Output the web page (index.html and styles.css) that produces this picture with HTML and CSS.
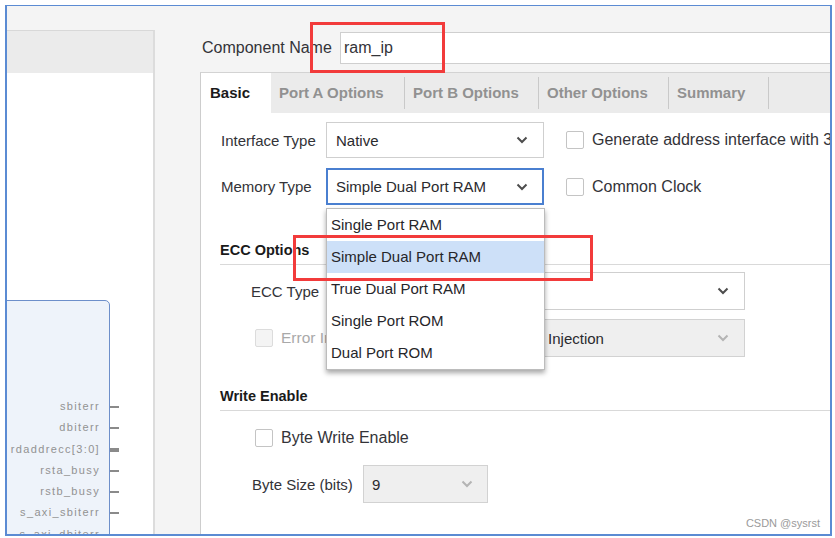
FILE: index.html
```html
<!DOCTYPE html>
<html>
<head>
<meta charset="utf-8">
<title>Block Memory Generator</title>
<link rel="stylesheet" href="styles.css">
</head>
<body>
<div class="frame">
  <aside class="side">
    <div class="side-panel">
      <div class="side-head"></div>
      <div class="canvas">
        <div class="symbol">
          <ul class="pins">
            <li class="pin">sbiterr</li>
            <li class="pin">dbiterr</li>
            <li class="pin bus">rdaddrecc[3:0]</li>
            <li class="pin">rsta_busy</li>
            <li class="pin">rstb_busy</li>
            <li class="pin">s_axi_sbiterr</li>
            <li class="pin">s_axi_dbiterr</li>
          </ul>
        </div>
      </div>
    </div>
  </aside>

  <main class="main">
    <div class="comp-row">
      <span class="comp-label">Component Name</span>
      <div class="comp-input">ram_ip</div>
    </div>

    <section class="tabpanel">
      <nav class="tabs">
        <span class="tab active">Basic</span>
        <span class="tab tab-a">Port A Options</span><span class="sep"></span>
        <span class="tab tab-b">Port B Options</span><span class="sep"></span>
        <span class="tab tab-o">Other Options</span><span class="sep"></span>
        <span class="tab tab-s">Summary</span><span class="sep"></span>
      </nav>

      <div class="tab-body">
        <div class="row">
          <span class="label">Interface Type</span>
          <div class="select wide"><span>Native</span><svg class="chev" width="12" height="8" viewBox="0 0 12 8"><path d="M1.5 1.5 L6 6 L10.5 1.5" fill="none" stroke="#4d4d4d" stroke-width="2"/></svg></div>
          <span class="cb gap"></span>
          <span class="cb-text">Generate address interface with 32 bits</span>
        </div>

        <div class="row row2">
          <span class="label">Memory Type</span>
          <div class="select wide focus">
            <span>Simple Dual Port RAM</span><svg class="chev" width="12" height="8" viewBox="0 0 12 8"><path d="M1.5 1.5 L6 6 L10.5 1.5" fill="none" stroke="#4d4d4d" stroke-width="2"/></svg>
            <ul class="menu">
              <li>Single Port RAM</li>
              <li class="hl">Simple Dual Port RAM</li>
              <li>True Dual Port RAM</li>
              <li>Single Port ROM</li>
              <li>Dual Port ROM</li>
            </ul>
          </div>
          <span class="cb gap"></span>
          <span class="cb-text">Common Clock</span>
        </div>

        <h3 class="section sec-ecc">ECC Options</h3>

        <div class="row ind ecc-row">
          <span class="label ecc-label">ECC Type</span>
          <div class="select ecc-select"><span></span><svg class="chev" width="12" height="8" viewBox="0 0 12 8"><path d="M1.5 1.5 L6 6 L10.5 1.5" fill="none" stroke="#4d4d4d" stroke-width="2"/></svg></div>
        </div>

        <div class="row ind err-row">
          <div class="check-wrap">
            <span class="cb dis"></span>
            <span class="cb-text dim">Error Injection Pins</span>
          </div>
          <div class="select ecc-select disabled err-select"><span>Single Bit Error Injection</span><svg class="chev" width="12" height="8" viewBox="0 0 12 8"><path d="M1.5 1.5 L6 6 L10.5 1.5" fill="none" stroke="#b4b4b4" stroke-width="2"/></svg></div>
        </div>

        <h3 class="section sec-we">Write Enable</h3>

        <div class="row ind bwe-row">
          <span class="cb"></span>
          <span class="cb-text">Byte Write Enable</span>
        </div>

        <div class="row ind bs-row">
          <span class="label bs-label">Byte Size (bits)</span>
          <div class="select disabled bs-select"><span>9</span><svg class="chev" width="12" height="8" viewBox="0 0 12 8"><path d="M1.5 1.5 L6 6 L10.5 1.5" fill="none" stroke="#b4b4b4" stroke-width="2"/></svg></div>
        </div>
      </div>
    </section>
  </main>

  <div class="mark mark-name"></div>
  <div class="mark mark-type"></div>
  <div class="wm">CSDN @sysrst</div>
</div>
</body>
</html>
```

FILE: styles.css
```css
* { box-sizing: border-box; }
html, body { margin: 0; padding: 0; }
body {
  width: 835px;
  height: 538px;
  overflow: hidden;
  background: #ffffff;
  font-family: "Liberation Sans", Arial, sans-serif;
  font-size: 15px;
  color: #333338;
}
ul { list-style: none; margin: 0; padding: 0; }
h3 { margin: 0; }

.frame {
  position: relative;
  margin: 5px 0 0 5px;
  width: 827px;
  height: 531px;
  border: 2px solid #5b8bd3;
  border-top-width: 1px;
  background: #f4f4f4;
  display: flex;
  overflow: hidden;
}

/* left: symbol view */
.side {
  width: 148px;
  flex: none;
  padding-top: 24px;
  display: flex;
}
.side-panel {
  flex: 1;
  background: #fff;
  border-top: 1px solid #d8d8d8;
  border-right: 2px solid #dcdcdc;
  display: flex;
  flex-direction: column;
}
.side-head {
  height: 42px;
  background: #ebebeb;
}
.canvas {
  flex: 1;
  position: relative;
  overflow: hidden;
}
.symbol {
  position: absolute;
  left: -3px;
  top: 227px;
  width: 106px;
  height: 300px;
  background: #eef3fa;
  border: 1px solid #6d8fca;
  border-top-right-radius: 5px;
  padding-top: 95px;
}
.pins { display: flex; flex-direction: column; }
.pin {
  position: relative;
  height: 21.3px;
  line-height: 21.3px;
  text-align: right;
  padding-right: 9px;
  font-size: 11px;
  letter-spacing: 1.35px;
  color: #929292;
  white-space: nowrap;
}
.pin::after {
  content: "";
  position: absolute;
  right: -10px;
  top: 10px;
  width: 9px;
  height: 2px;
  background: #8a8a8a;
}
.pin.bus::after { height: 4px; top: 9px; }

/* right: configuration */
.main {
  flex: 1;
  margin-left: 45px;
  display: flex;
  flex-direction: column;
  min-width: 0;
}
.comp-row {
  display: flex;
  align-items: center;
  height: 32px;
  margin-top: 26px;
  padding-left: 2px;
  font-size: 16px;
}
.comp-label { width: 138px; flex: none; }
.comp-input {
  flex: 1;
  height: 32px;
  background: #fff;
  border: 1px solid #cfcfcf;
  border-right: none;
  padding-left: 3px;
  display: flex;
  align-items: center;
}

.tabpanel {
  margin-top: 8px;
  flex: 1;
  background: #fff;
  border-top: 1px solid #d3d3d3;
  border-left: 1px solid #cdcdcd;
  display: flex;
  flex-direction: column;
}
.tabs {
  height: 40px;
  flex: none;
  background: #ebebeb;
  display: flex;
  align-items: center;
  padding-bottom: 1px;
}
.tab {
  height: 100%;
  display: flex;
  align-items: center;
  font-weight: bold;
  font-size: 15px;
  color: #919191;
  padding-left: 8px;
  flex: none;
}
.tab.active { width: 70px; padding-left: 9px; background: #fff; color: #1b1b1b; height: 40px; align-self: flex-start; padding-bottom: 1px; }
.tab-a { width: 133px; }
.tab-b { width: 133px; }
.tab-o { width: 129px; }
.tab-s { width: 99px; }
.sep { width: 1px; height: 32px; background: #c9c9c9; flex: none; }

.tab-body { flex: 1; padding-top: 9px; position: relative; }

.row {
  display: flex;
  align-items: center;
  height: 36px;
  padding-left: 20px;
}
.row2 { margin-top: 10px; height: 37px; }
.label { width: 105px; flex: none; }

.select {
  position: relative;
  height: 100%;
  display: flex;
  align-items: center;
  justify-content: space-between;
  background: #fff;
  border: 1px solid #cfcfcf;
  padding: 0 15px 0 9px;
  color: #2a2a2e;
  flex: none;
}
.select.wide { width: 218px; }
.select.focus { border: 2px solid #4a7fd0; padding-left: 8px; padding-right: 14px; }
.select.disabled { background: #efefef; border-color: #d2d2d2; }
.chev { flex: none; }

.cb {
  width: 18px;
  height: 18px;
  flex: none;
  background: #fff;
  border: 1px solid #c4c4c4;
  border-radius: 2px;
}
.cb.gap { margin-left: 22px; }
.cb.dis { background: #f4f4f4; border-color: #dcdcdc; }
.cb-text { margin-left: 8px; white-space: nowrap; font-size: 16px; }
.cb-text.dim { color: #a9a9a9; font-size: 15.5px; }

.menu {
  position: absolute;
  left: -2px;
  top: 38px;
  width: 219px;
  background: #fff;
  border: 1px solid #bcbcbc;
  box-shadow: 0 3px 5px rgba(0, 0, 0, 0.35);
  z-index: 5;
}
.menu li {
  height: 32px;
  line-height: 31px;
  padding-left: 4px;
  color: #26262a;
}
.menu li.hl { background: #cde0f8; }

.section {
  margin-left: 19px;
  padding-bottom: 5px;
  border-bottom: 1px solid #d9d9d9;
  font-size: 14.5px;
  line-height: 17px;
  font-weight: bold;
  color: #1a1a1a;
}
.sec-ecc { margin-top: 37px; }
.sec-we { margin-top: 31px; }

.row.ind { padding-left: 50px; height: 38px; }
.ecc-row { margin-top: 7px; }
.ecc-label { width: 176px; }
.ecc-select { width: 318px; }
.err-select { padding-left: 15px; }
.err-row { margin-top: 9px; }
.check-wrap { width: 176px; flex: none; display: flex; align-items: center; padding-left: 4px; overflow: hidden; }

.row.bwe-row { margin-top: 18px; height: 18px; padding-left: 54px; }
.row.bs-row { margin-top: 18px; padding-left: 51px; }
.bs-label { width: 111px; }
.bs-select { width: 125px; padding-left: 8px; padding-right: 14px; }

.mark {
  position: absolute;
  border: 3px solid #f23b3b;
  z-index: 10;
}
.mark-name { left: 303px; top: 16px; width: 135px; height: 51px; }
.mark-type { left: 286px; top: 229px; width: 300px; height: 46px; }

.wm {
  position: absolute;
  right: 10px;
  bottom: 5px;
  font-size: 11px;
  color: #9a9a9a;
  z-index: 3;
}
```
